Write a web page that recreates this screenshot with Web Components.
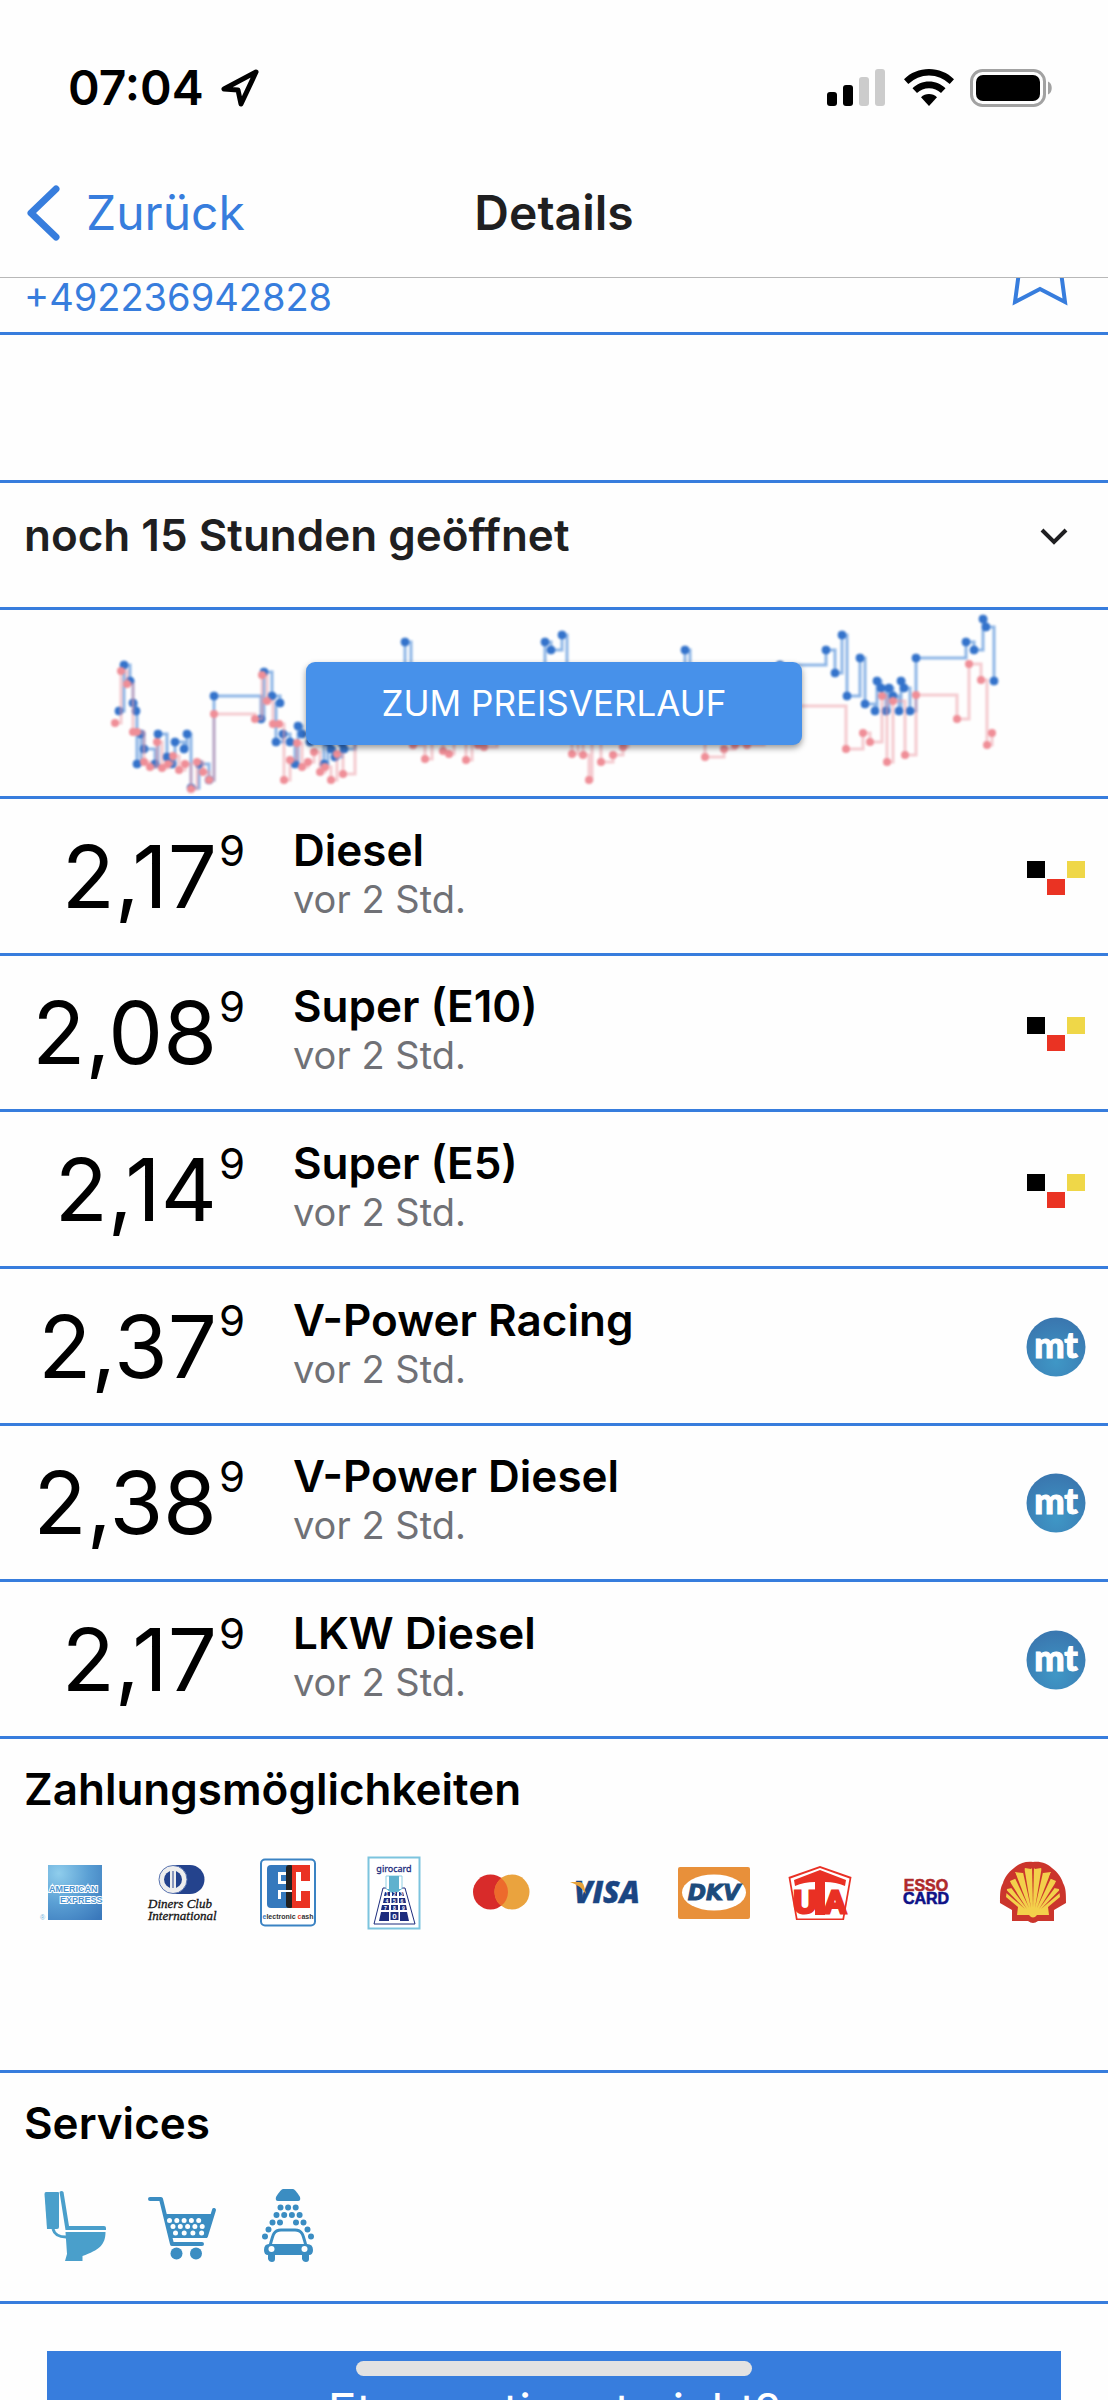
<!DOCTYPE html>
<html lang="de">
<head>
<meta charset="utf-8">
<meta name="viewport" content="width=device-width, initial-scale=1">
<title>Details</title>
<style>
  :root {
    --accent: #377ddd;
    --text: #1f1f21;
    --muted: #707176;
    --gutter: 24px;
    --line: 3px solid var(--accent);
  }

  body {
    margin: 0;
    background-color: #fefefe;
    color: #000;
    font-family: Inter, "Liberation Sans", sans-serif;
  }
</style>
</head>
<body>

<station-app>
  <status-bar slot="header" time="07:04"></status-bar>
  <nav-bar slot="header" back="Zurück">Details</nav-bar>

  <contact-row phone="+492236942828"></contact-row>
  <opening-hours>noch 15 Stunden geöffnet</opening-hours>
  <price-chart>Zum Preisverlauf</price-chart>

  <price-list>
    <fuel-price price="2,17" source="mts" age="vor 2 Std.">Diesel</fuel-price>
    <fuel-price price="2,08" source="mts" age="vor 2 Std.">Super (E10)</fuel-price>
    <fuel-price price="2,14" source="mts" age="vor 2 Std.">Super (E5)</fuel-price>
    <fuel-price price="2,37" source="mt" age="vor 2 Std.">V-Power Racing</fuel-price>
    <fuel-price price="2,38" source="mt" age="vor 2 Std.">V-Power Diesel</fuel-price>
    <fuel-price price="2,17" source="mt" age="vor 2 Std.">LKW Diesel</fuel-price>
  </price-list>

  <icon-section heading="Zahlungsmöglichkeiten" rows="2">
    <brand-icon name="amex"></brand-icon>
    <brand-icon name="diners"></brand-icon>
    <brand-icon name="ec"></brand-icon>
    <brand-icon name="girocard"></brand-icon>
    <brand-icon name="mastercard"></brand-icon>
    <brand-icon name="visa"></brand-icon>
    <brand-icon name="dkv"></brand-icon>
    <brand-icon name="uta"></brand-icon>
    <brand-icon name="esso"></brand-icon>
    <brand-icon name="shell"></brand-icon>
  </icon-section>

  <icon-section heading="Services" rows="1">
    <brand-icon name="toilet"></brand-icon>
    <brand-icon name="shop"></brand-icon>
    <brand-icon name="carwash"></brand-icon>
  </icon-section>

  <report-button>Etwas stimmt nicht?</report-button>
</station-app>

<script>
/**
 * Attach an open shadow root filled with the given markup.
 *
 * @param {HTMLElement} host - The custom element.
 * @param {string} html - Styles and markup.
 */
function render(host, html) {
  const template = document.createElement('template');
  template.innerHTML = html;
  host.attachShadow({ mode: 'open' });
  host.shadowRoot.appendChild(template.content.cloneNode(true));
}

/**
 * App frame: fixed header, scrolling content, home indicator on top.
 */
class StationApp extends HTMLElement {
  connectedCallback() {
    render(this, `
      <style>
        :host {
          display: flex;
          flex-direction: column;
          height: 100vh;
          position: relative;
          overflow: hidden;
        }

        header {
          flex: none;
          background-color: #fefefe;
          border-bottom: 1px solid #b8b8b8;
        }

        main {
          flex: 1;
          min-height: 0;
          overflow-y: auto;
          scrollbar-width: none;
        }

        .home-indicator {
          position: absolute;
          left: 50%;
          bottom: 24px;
          width: 396px;
          height: 15px;
          margin-left: -198px;
          border-radius: 8px;
          background-color: #e2e2e2;
        }
      </style>
      <header><slot name="header"></slot></header>
      <main><slot></slot></main>
      <div class="home-indicator"></div>
    `);
  }
}

/**
 * Phone status bar with clock, signal, wifi and battery.
 */
class StatusBar extends HTMLElement {
  connectedCallback() {
    render(this, `
      <style>
        :host {
          display: flex;
          align-items: center;
          justify-content: space-between;
          height: 48px;
          padding: 64px 54px 36px 68px;
        }

        div {
          display: flex;
          align-items: center;
          gap: 16px;
        }

        time {
          font-size: 48px;
          font-weight: 600;
          line-height: 48px;
        }

        svg {
          display: block;
        }
      </style>
      <div>
        <time>${this.getAttribute('time')}</time>
        <svg width="40" height="40" viewBox="0 0 40 40" fill="none" stroke="#000" stroke-width="5" stroke-linejoin="round">
          <path d="M36 4 4 21 18 22 21 36Z"/>
        </svg>
      </div>
      <div>
        <svg width="61" height="38" viewBox="0 0 61 38">
          <rect x="0" y="23" width="10" height="14" rx="3"/>
          <rect x="16" y="16" width="10" height="21" rx="3"/>
          <rect x="32" y="8" width="10" height="29" rx="3" fill="#ccc"/>
          <rect x="48" y="0" width="10" height="37" rx="3" fill="#ccc"/>
        </svg>
        <svg width="50" height="38" viewBox="0 0 50 38">
          <path d="M25 0C15.500 0 6.500 3.700 0 10.200L4.300 15A29.500 29.500 0 0 1 45.700 15L50 10.200C43.500 3.700 34.500 0 25 0Z"/>
          <path d="M25 12.500C18.600 12.500 12.800 15 8.500 19.200L13 24A17.500 17.500 0 0 1 37 24L41.500 19.200C37.200 15 31.400 12.500 25 12.500Z"/>
          <path d="M25 25C21.900 25 19.200 26.200 17 28.200L25 37 33 28.200C30.800 26.200 28.100 25 25 25Z"/>
        </svg>
        <svg width="84" height="38" viewBox="0 0 84 38">
          <rect x="1.500" y="1.500" width="73" height="35" rx="11" fill="none" stroke="#a2a2a2" stroke-width="3"/>
          <rect x="6" y="6" width="64" height="26" rx="7"/>
          <path d="M78 12.500c5 2 5 11 0 13z" fill="#a2a2a2"/>
        </svg>
      </div>
    `);
  }
}

/**
 * Navigation bar with back link and centred title.
 */
class NavBar extends HTMLElement {
  connectedCallback() {
    render(this, `
      <style>
        :host {
          display: grid;
          grid-template-columns: 1fr auto 1fr;
          align-items: center;
          height: 129px;
          box-sizing: border-box;
          padding: 0 var(--gutter);
        }

        a {
          display: flex;
          align-items: center;
          gap: 24px;
          color: var(--accent);
          font-size: 48px;
          line-height: 56px;
          text-decoration: none;
        }

        h1 {
          margin: 0;
          color: var(--text);
          font-size: 48px;
          font-weight: 600;
          line-height: 56px;
        }
      </style>
      <a href="#back">
        <svg width="38" height="58" viewBox="0 0 38 58" fill="none" stroke="currentColor" stroke-width="7" stroke-linecap="round" stroke-linejoin="round">
          <path d="M32 5 7 29l25 24"/>
        </svg>
        ${this.getAttribute('back')}
      </a>
      <h1><slot></slot></h1>
    `);
  }
}

/**
 * Phone number and favourite button.
 */
class ContactRow extends HTMLElement {
  connectedCallback() {
    const phone = this.getAttribute('phone');
    render(this, `
      <style>
        :host {
          display: block;
          border-bottom: var(--line);
          padding-bottom: 145px;
        }

        div {
          display: flex;
          justify-content: space-between;
          height: 54px;
          padding: 0 38px 0 var(--gutter);
          border-bottom: var(--line);
        }

        a {
          color: var(--accent);
          font-size: 38px;
          line-height: 38px;
          text-decoration: none;
        }

        button {
          align-self: flex-start;
          padding: 0;
          border: 0;
          background: none;
          color: var(--accent);
        }

        svg {
          display: block;
        }
      </style>
      <div>
        <a href="tel:${phone}">${phone}</a>
        <button aria-label="Favorit">
          <svg width="60" height="30" viewBox="0 0 60 30" fill="none" stroke="currentColor" stroke-width="4">
            <path d="M9-6 5 24 30 11 55 24 51-6"/>
          </svg>
        </button>
      </div>
    `);
  }
}

/**
 * Expandable opening hours.
 */
class OpeningHours extends HTMLElement {
  connectedCallback() {
    render(this, `
      <style>
        :host {
          display: block;
          border-bottom: var(--line);
        }

        button {
          display: flex;
          justify-content: space-between;
          align-items: center;
          width: 100%;
          padding: 28px 38px 48px var(--gutter);
          border: 0;
          background: none;
          color: var(--text);
          font: inherit;
          font-size: 44px;
          font-weight: 600;
          line-height: 48px;
          text-align: left;
        }
      </style>
      <button aria-expanded="false">
        <slot></slot>
        <svg width="32" height="20" viewBox="0 0 32 20" fill="none" stroke="currentColor" stroke-width="4">
          <path d="M4 5l12 12L28 5"/>
        </svg>
      </button>
    `);
  }
}

/**
 * Blurred price history preview behind a button.
 */
class PriceChart extends HTMLElement {

  static high = [
    [119, 101], [124, 55], [130, 71], [133, 93], [136, 101], [137, 154], [141, 124], [144, 139],
    [155, 154], [158, 124], [167, 147], [172, 154], [175, 132], [184, 139], [187, 124], [191, 178],
    [199, 154], [209, 170], [214, 86], [261, 109], [264, 62], [272, 86], [280, 93], [276, 132],
    [283, 124], [290, 132], [295, 154], [298, 116], [302, 124], [310, 132], [324, 154], [328, 132],
    [331, 139], [335, 147], [342, 133], [344, 139], [355, 100], [405, 32], [411, 80], [545, 32],
    [551, 40], [562, 25], [567, 80], [685, 40], [690, 80], [780, 55], [826, 40], [835, 63],
    [842, 25], [847, 86], [860, 48], [865, 94], [875, 101], [877, 71], [881, 78], [886, 101],
    [889, 78], [893, 86], [899, 101], [901, 71], [904, 78], [910, 101], [916, 48], [966, 32],
    [974, 40], [983, 9], [986, 17], [994, 71]
  ];

  static low = [
    [115, 113], [121, 61], [127, 74], [133, 122], [137, 122], [144, 152], [150, 157], [157, 132],
    [162, 158], [168, 154], [173, 146], [179, 160], [185, 154], [191, 179], [197, 152], [203, 162],
    [209, 170], [214, 104], [255, 109], [262, 65], [267, 91], [273, 114], [279, 114], [284, 170],
    [290, 150], [297, 133], [302, 157], [308, 152], [314, 142], [320, 162], [325, 157], [331, 170],
    [337, 144], [343, 164], [355, 110], [413, 135], [425, 149], [432, 120], [443, 141], [449, 144],
    [454, 125], [466, 150], [472, 125], [478, 135], [484, 137], [497, 120], [572, 144], [578, 120],
    [583, 145], [589, 170], [592, 120], [601, 152], [613, 145], [623, 137], [628, 120], [705, 147],
    [724, 139], [735, 135], [747, 135], [764, 120], [780, 96], [846, 139], [863, 123], [870, 132],
    [882, 86], [887, 152], [893, 91], [905, 145], [916, 85], [957, 109], [969, 54], [981, 70],
    [987, 135], [992, 123]
  ];

  /**
   * Draw one series as a stepped line with a dot per price change.
   *
   * @param {Array} points - List of [x, y].
   * @param {string} name - Class of the series.
   */
  series(points, name) {
    const steps = points.map(([x, y], i) => i ? `H${x}V${y}` : `M${x} ${y}`).join('');
    const dots = points.map(([x, y]) => `<circle cx="${x}" cy="${y}" r="4"/>`).join('');
    return `<g class="${name}"><path d="${steps}"/>${dots}</g>`;
  }

  connectedCallback() {
    render(this, `
      <style>
        :host {
          display: grid;
          place-items: center;
          border-bottom: var(--line);
        }

        svg, button {
          grid-area: 1 / 1;
        }

        svg {
          display: block;
          width: 100%;
          height: 186px;
          filter: blur(1px);
        }

        path {
          fill: none;
          stroke-width: 3;
        }

        .high { fill: #3473cb; stroke: #3473cb; }
        .high path { stroke: #8db5e6; }
        .low { fill: #ef8e97; stroke: none; }
        .low path { stroke: #ee9aa4; stroke-opacity: 0.5; }

        button {
          position: relative;
          padding: 17px 76px;
          border: 0;
          border-radius: 9px;
          background-color: #4791ea;
          box-shadow: 0 3px 6px rgba(0, 0, 0, 0.4);
          color: #fff;
          font: inherit;
          font-size: 35px;
          line-height: 49px;
          text-transform: uppercase;
        }
      </style>
      <svg viewBox="0 0 1108 186" aria-hidden="true">
        ${this.series(PriceChart.high, 'high')}
        ${this.series(PriceChart.low, 'low')}
      </svg>
      <button><slot></slot></button>
    `);
  }
}

/**
 * List of fuel prices in rows of equal height.
 */
class PriceList extends HTMLElement {
  connectedCallback() {
    this.setAttribute('role', 'list');
    render(this, `
      <style>
        :host {
          display: grid;
          grid-auto-rows: 1fr;
          min-height: 940px;
        }
      </style>
      <slot></slot>
    `);
  }
}

/**
 * One fuel price, with the source it was reported by.
 */
class FuelPrice extends HTMLElement {

  static sources = {
    mts: `
      <rect x="1" y="14" width="18" height="17" fill="#000"/>
      <rect x="21" y="32" width="18" height="16" fill="#ea3323"/>
      <rect x="41" y="14" width="18" height="17" fill="#efd748"/>`,
    mt: `
      <defs>
        <radialGradient id="g" cy=".75" r=".7">
          <stop offset="0" stop-color="#3f97c6"/>
          <stop offset="1" stop-color="#3a78b0"/>
        </radialGradient>
      </defs>
      <circle cx="30" cy="30" r="29.500" fill="url(#g)"/>
      <text x="30" y="41" text-anchor="middle" font-family="Lato" font-weight="900" font-size="36" fill="#fff" stroke="#fff">mt</text>`
  };

  connectedCallback() {
    this.setAttribute('role', 'listitem');
    render(this, `
      <style>
        :host {
          display: grid;
          grid-template-columns: 221px 1fr auto;
          align-items: center;
          column-gap: 48px;
          padding: 2px 22px 0 var(--gutter);
          border-bottom: var(--line);
        }

        .price {
          display: flex;
          justify-content: flex-end;
          gap: 2px;
          font-size: 87px;
          line-height: 100px;
        }

        sup {
          font-size: 42px;
          line-height: 48px;
        }

        .fuel {
          padding-bottom: 4px;
        }

        h2, p {
          margin: 0;
          line-height: 49px;
        }

        h2 {
          font-size: 44px;
          font-weight: 600;
        }

        p {
          color: var(--muted);
          font-size: 38px;
        }

        svg {
          display: block;
        }
      </style>
      <div class="price"><span>${this.getAttribute('price')}</span><sup>9</sup></div>
      <div class="fuel">
        <h2><slot></slot></h2>
        <p>${this.getAttribute('age')}</p>
      </div>
      <svg width="60" height="60" viewBox="0 0 60 60">${FuelPrice.sources[this.getAttribute('source')]}</svg>
    `);
  }
}

/**
 * Headed section with a grid of icons.
 */
class IconSection extends HTMLElement {
  connectedCallback() {
    render(this, `
      <style>
        :host {
          display: block;
          padding: 26px 22px 0;
          border-bottom: var(--line);
        }

        h2 {
          margin: 0 2px 41px;
          font-size: 44px;
          font-weight: 600;
          line-height: 48px;
        }

        div {
          display: grid;
          grid-template-columns: repeat(10, 1fr);
          grid-template-rows: repeat(${this.getAttribute('rows')}, 76px);
          row-gap: 27px;
          justify-items: center;
          padding-bottom: 37px;
        }
      </style>
      <h2>${this.getAttribute('heading')}</h2>
      <div><slot></slot></div>
    `);
  }
}

/**
 * Payment and service icons on a 76px canvas.
 */
class BrandIcon extends HTMLElement {

  static icons = {
    amex: `
      <defs>
        <radialGradient id="g" cx=".2" cy=".15" r="1.100">
          <stop offset="0" stop-color="#8fcdec"/>
          <stop offset=".5" stop-color="#5a9fd4"/>
          <stop offset="1" stop-color="#3a78bb"/>
        </radialGradient>
      </defs>
      <rect x="11" y="11" width="54" height="55" fill="url(#g)"/>
      <g font-family="Liberation Sans" font-weight="700" font-size="9" fill="#4a93cf" stroke="#fff" stroke-width="2" paint-order="stroke">
        <text x="12" y="38">AMERICAN</text>
        <text x="23" y="49">EXPRESS</text>
      </g>
      <text x="3" y="66" font-family="Liberation Sans" font-size="7" fill="#6fb2dc">®</text>`,
    diners: `
      <path d="M29 11h17a14.500 14.500 0 0 1 0 29H29z" fill="#24438d"/>
      <circle cx="29" cy="25.500" r="14" fill="#eee" stroke="#5873b0"/>
      <circle cx="29" cy="25.500" r="9" fill="#24438d"/>
      <path d="M26 15h6v21h-6z" fill="#eee"/>
      <path d="M28.500 17h1v17h-1z" fill="#24438d"/>
      <g font-family="Liberation Serif" font-style="italic" font-size="13" fill="#111" stroke="#111" stroke-width=".3">
        <text x="4" y="54">Diners Club</text>
        <text x="4" y="66">International</text>
      </g>`,
    ec: `
      <rect x="11" y="5.500" width="54" height="66" rx="4" fill="#fff" stroke="#3b83c3" stroke-width="2"/>
      <rect x="17" y="11" width="25" height="43" rx="4" fill="#3579bd"/>
      <rect x="36" y="11" width="8" height="43" rx="3" fill="#222"/>
      <rect x="42" y="11" width="18" height="43" fill="#ea3323"/>
      <rect x="28" y="18" width="8" height="12" fill="#fff"/>
      <rect x="31" y="21" width="5" height="6" fill="#3579bd"/>
      <rect x="28" y="37" width="3" height="8" fill="#fff"/>
      <rect x="28" y="36" width="14" height="2" fill="#fff"/>
      <rect x="46" y="18" width="5" height="29" fill="#fff"/>
      <rect x="51" y="27" width="9" height="10" fill="#fff"/>
      <text x="38" y="65" text-anchor="middle" font-family="Liberation Sans Narrow, Liberation Sans" font-weight="700" font-size="7" fill="#333"><tspan fill="#3579bd">e</tspan>lectronic <tspan fill="#ea3323">c</tspan>ash</text>`,
    girocard: `
      <rect x="12.500" y="3.500" width="51" height="71" fill="#fff" stroke="#7cc4de" stroke-width="2"/>
      <text x="38" y="18" text-anchor="middle" font-family="Noto Sans" font-size="9" fill="#1c2c7d" stroke="#1c2c7d" stroke-width=".3">girocard</text>
      <path d="M27 34h22l10 36H18z" fill="#fff" stroke="#1c2c7d"/>
      <path d="M30 22h16v12l-4 4h-8l-4-4z" fill="#fff" stroke="#8fd0e4"/>
      <path d="M33 22h10v13h3l-8 5-8-5h3z" fill="#5fb1ce"/>
      <g fill="#1c2c7d">
        <path d="M29 38h5v4h-6zM36 38h5v4h-5zM43 38h4l1 4h-5z"/>
        <path d="M28 44h6v5h-7zM35.500 44h6v5h-6zM43 44h6l1 5h-7z"/>
        <path d="M26 51h7v5h-8zM35 51h7v5h-7zM44 51h6l1 5h-7z"/>
        <path d="M25 58h8v9H23zM34.500 58h8v8h-8zM44 58h7l2 9h-9z"/>
      </g>
      <g font-family="Liberation Sans" font-weight="700" fill="#fff" text-anchor="middle">
        <text font-size="5" y="42"><tspan x="31">1</tspan><tspan x="38.500">2</tspan><tspan x="45.500">3</tspan></text>
        <text font-size="5" y="48.500"><tspan x="31">4</tspan><tspan x="38.500">5</tspan><tspan x="46">6</tspan></text>
        <text font-size="5" y="55.500"><tspan x="29.500">7</tspan><tspan x="38.500">8</tspan><tspan x="47.500">9</tspan></text>
        <text font-size="8" x="38.500" y="65">0</text>
      </g>`,
    mastercard: `
      <circle cx="27.500" cy="38" r="17.500" fill="#d82b2a"/>
      <circle cx="49" cy="38" r="17.500" fill="#eaa33e"/>
      <path d="M38.250 24.200a17.500 17.500 0 0 1 0 27.600 17.500 17.500 0 0 1 0-27.600z" fill="#ed6a2c"/>`,
    visa: `
      <text x="5" y="49" font-family="Open Sans" font-style="italic" font-weight="800" font-size="30" fill="#1a4583" stroke="#1a4583" stroke-width=".5">VISA</text>
      <path d="M1 28h9q4 0 5 4l2 8Q11 31 1 28z" fill="#e8a33a"/>`,
    dkv: `
      <rect x="2" y="13" width="72" height="52" rx="2" fill="#e8903a"/>
      <ellipse cx="38" cy="38.500" rx="32" ry="18" fill="#fff"/>
      <text x="38" y="46" text-anchor="middle" font-family="DejaVu Sans" font-style="italic" font-weight="700" font-size="22" fill="#1d4b7b" stroke="#1d4b7b">DKV</text>`,
    uta: `
      <path d="M38 12 69.500 23 62 66H14L6.500 23z" fill="#e93024"/>
      <path d="M38 14 67.500 24.500 60.500 64.500H15.500L8.500 24.500z" fill="#fff"/>
      <path d="M38 16 64 26 63 32Q54 28 43 28V61H33V28Q22 28 13 32L12 26z" fill="#e93024"/>
      <g font-family="Liberation Sans Narrow, Liberation Sans" font-weight="700" font-size="32" text-anchor="middle" fill="#e93024" stroke="#e93024" stroke-width="3">
        <text x="23" y="59">U</text>
        <text x="53" y="59">A</text>
      </g>`,
    esso: `
      <g font-family="Liberation Sans" font-weight="700" font-size="16" text-anchor="middle" stroke-width=".6">
        <text x="38" y="37" fill="#af2a2c" stroke="#af2a2c">ESSO</text>
        <text x="38" y="50" fill="#0e1187" stroke="#0e1187">CARD</text>
      </g>`,
    shell: `
      <path d="M38 8C46 7 53 10 57 14 63 18 67 25 68 29 71 34 71 40 71 49L59 56V67H43Q38 71 33 67H17V56L5 49C5 40 5 34 8 29 9 25 13 18 19 14 23 10 30 7 38 8z" fill="#cb352c"/>
      <path d="M22 61 23 53 11 43 12 35 17 34 15 27 22 24 20 18 28 19 30 14 36 15 38 13 40 15 46 14 48 19 56 18 54 24 61 27 59 34 64 35 65 43 53 53 54 61 42 61Q38 66 34 61z" fill="#f3d04b"/>
      <g fill="#cb352c">
        <path d="M37 13h2L38 54z"/>
        <path d="M27.500 16 29.500 15 36 54z"/>
        <path d="M48.500 16 46.500 15 40 54z"/>
        <path d="M18.500 21 20.500 19 34 54z"/>
        <path d="M57.500 21 55.500 19 42 54z"/>
        <path d="M13 29.500 14.500 27 32 55z"/>
        <path d="M63 29.500 61.500 27 44 55z"/>
        <path d="M10 38 11 35.500 30 55z"/>
        <path d="M66 38 65 35.500 46 55z"/>
      </g>`,
    toilet: `
      <g fill="#4a9fcb">
        <path d="M9 4h12q1 0 1 1v34q0 2-2 2H10L7.500 6q0-2 1.500-2z"/>
        <path d="M22.500 4q2-2 4 0L32 38h35q2 0 2 2v2H28.500z"/>
        <path d="M28.500 44H68.500C68.500 57 62 62 45.500 68V73H28L30 66z"/>
      </g>
      <path d="M16 41q2 8 13 8" fill="none" stroke="#4a9fcb" stroke-width="3"/>`,
    shop: `
      <g fill="none" stroke="#3b8dc2" stroke-width="4" stroke-linecap="round" stroke-linejoin="round">
        <path d="M6 11h11l11 45h30"/>
        <path d="M62 48 70 22"/>
      </g>
      <path d="M20.500 26H68L63 50H27z" fill="#3b8dc2"/>
      <g stroke="#fefefe" stroke-width="5" stroke-linecap="round">
        <path d="M25.500 32.500H62" stroke-dasharray="0 7.300"/>
        <path d="M29 38.500H59" stroke-dasharray="0 7.300"/>
        <path d="M31.500 45H58.500" stroke-dasharray="0 8.700"/>
      </g>
      <circle cx="32.500" cy="65.500" r="6" fill="#3b8dc2"/>
      <circle cx="52" cy="65.500" r="6" fill="#3b8dc2"/>`,
    carwash: `
      <g fill="#3b8dc2">
        <path d="M33 1H43Q45 1 50 9 51 13 48 13H28Q25 13 26 9 31 1 33 1z"/>
        <path d="M19 56h38q6 0 6 6 0 5-4 5v4q0 3-3 3t-4-3v-4H25v4q0 3-3 3t-4-3v-4q-4 0-4-5 0-6 5-6z"/>
      </g>
      <path d="M20 58C23 46 24 42 31 42H45C52 42 53 46 56 58" fill="none" stroke="#3b8dc2" stroke-width="3"/>
      <circle cx="21.500" cy="61" r="3" fill="#fefefe"/>
      <circle cx="54.500" cy="61" r="3" fill="#fefefe"/>
      <g fill="none" stroke="#3b8dc2" stroke-width="6" stroke-linecap="round">
        <path d="M30.500 19.500h16" stroke-dasharray="0 7.600"/>
        <path d="M26.500 27h24" stroke-dasharray="0 7.700"/>
        <path d="M22.500 34.500h0M30 34.500h0M46 34.500h0M53.500 34.500h0M18.500 41.500h0M57.500 41.500h0M15 48.500h0M61 48.500h0"/>
      </g>`
  };

  connectedCallback() {
    render(this, `
      <style>
        :host {
          display: block;
        }

        svg {
          display: block;
          overflow: visible;
        }
      </style>
      <svg width="76" height="76" viewBox="0 0 76 76">${BrandIcon.icons[this.getAttribute('name')]}</svg>
    `);
  }
}

/**
 * Full width button at the end of the page.
 */
class ReportButton extends HTMLElement {
  connectedCallback() {
    render(this, `
      <style>
        :host {
          display: block;
          padding: 47px;
        }

        button {
          width: 100%;
          padding: 32px;
          border: 0;
          background-color: var(--accent);
          color: #fff;
          font: inherit;
          font-size: 48px;
          line-height: 56px;
        }
      </style>
      <button><slot></slot></button>
    `);
  }
}

// Register custom elements
customElements.define('station-app', StationApp);
customElements.define('status-bar', StatusBar);
customElements.define('nav-bar', NavBar);
customElements.define('contact-row', ContactRow);
customElements.define('opening-hours', OpeningHours);
customElements.define('price-chart', PriceChart);
customElements.define('price-list', PriceList);
customElements.define('fuel-price', FuelPrice);
customElements.define('icon-section', IconSection);
customElements.define('brand-icon', BrandIcon);
customElements.define('report-button', ReportButton);
</script>
</body>
</html>
